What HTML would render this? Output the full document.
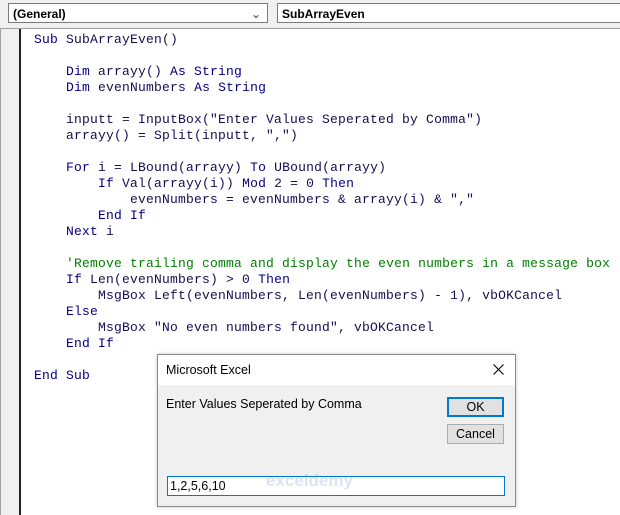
<!DOCTYPE html>
<html><head><meta charset="utf-8"><style>
body{margin:0;width:620px;height:515px;overflow:hidden;background:#fff;position:relative;font-family:"Liberation Sans",sans-serif}
.top{position:absolute;left:0;top:0;width:620px;height:28px;background:#f0f0f0;border-bottom:1px solid #a0a0a0}
.dd{position:absolute;top:3px;height:20px;background:#fff;border:1px solid #7a7a7a;font-size:12px;font-weight:bold;line-height:20px;padding-left:4px;box-sizing:border-box;color:#000}
.gut{position:absolute;left:0;top:29px;width:21px;height:486px;background:#f0f0f0;border-left:1px solid #a0a0a0;border-right:2px solid #222;box-sizing:border-box}
.code{position:absolute;left:34px;top:32px;font-family:"Liberation Mono",monospace;font-size:13px;letter-spacing:0.2px;line-height:16px;white-space:pre;color:#101050}
.k{color:#00007f}.c{color:#008000}
.dlg{position:absolute;left:157px;top:354px;width:359px;height:153px;background:#f0f0f0;border:1px solid #888;box-sizing:border-box;box-shadow:0 0 4px rgba(0,0,0,.2)}
.tb{height:30px;background:#fff;font-size:12.5px;line-height:30px;padding-left:8px;color:#000}
.btn{position:absolute;left:289px;width:57px;height:20px;background:#e1e1e1;border:1px solid #adadad;box-sizing:border-box;font-size:12.5px;text-align:center;line-height:18px}
</style></head><body>
<div class="top">
<div class="dd" style="left:8px;width:260px">(General)<span style="position:absolute;right:6px;top:0;font-weight:normal;color:#444">&#8964;</span></div>
<div class="dd" style="left:277px;width:350px">SubArrayEven</div>
</div>
<div class="gut"></div>
<div class="code"><span class="k">Sub</span> SubArrayEven()

    <span class="k">Dim</span> arrayy() <span class="k">As String</span>
    <span class="k">Dim</span> evenNumbers <span class="k">As String</span>

    inputt = InputBox("Enter Values Seperated by Comma")
    arrayy() = Split(inputt, ",")

    <span class="k">For</span> i = LBound(arrayy) <span class="k">To</span> UBound(arrayy)
        <span class="k">If</span> Val(arrayy(i)) <span class="k">Mod</span> 2 = 0 <span class="k">Then</span>
            evenNumbers = evenNumbers &amp; arrayy(i) &amp; ","
        <span class="k">End If</span>
    <span class="k">Next</span> i

    <span class="c">'Remove trailing comma and display the even numbers in a message box</span>
    <span class="k">If</span> Len(evenNumbers) &gt; 0 <span class="k">Then</span>
        MsgBox Left(evenNumbers, Len(evenNumbers) - 1), vbOKCancel
    <span class="k">Else</span>
        MsgBox "No even numbers found", vbOKCancel
    <span class="k">End If</span>

<span class="k">End Sub</span></div>
<div class="dlg">
<div class="tb">Microsoft Excel<svg style="position:absolute;left:335px;top:9px" width="11" height="11"><path d="M0.5 0.5L10.5 10.5M10.5 0.5L0.5 10.5" stroke="#000" stroke-width="1.1"/></svg></div>
<div style="position:absolute;left:8px;top:42px;font-size:12.5px;color:#000">Enter Values Seperated by Comma</div>
<div class="btn" style="top:42px;border:2px solid #0078d7;line-height:16px">OK</div>
<div class="btn" style="top:69px">Cancel</div>
<div style="position:absolute;left:9px;top:121px;width:338px;height:20px;background:#fff;border:1px solid #0078d7;box-sizing:border-box;font-size:12.5px;line-height:18px;padding-left:2px">1,2,5,6,10</div>
<div style="position:absolute;left:108px;top:116px;font-size:17px;font-weight:bold;color:rgba(120,140,220,.25)">exceldemy</div>
</div>
</body></html>
